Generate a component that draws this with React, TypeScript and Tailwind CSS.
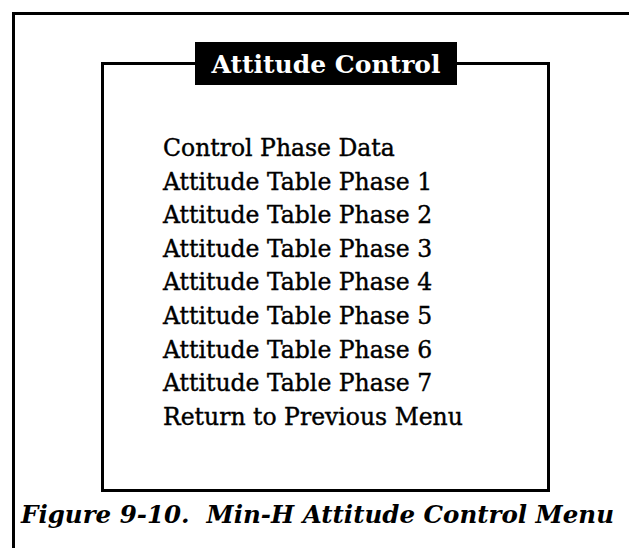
const items = [
  'Control Phase Data',
  'Attitude Table Phase 1',
  'Attitude Table Phase 2',
  'Attitude Table Phase 3',
  'Attitude Table Phase 4',
  'Attitude Table Phase 5',
  'Attitude Table Phase 6',
  'Attitude Table Phase 7',
  'Return to Previous Menu',
];

export default function App() {
  return (
    <div className="w-[629px] h-[548px] overflow-hidden bg-white pt-3 pl-3 font-['DejaVu_Serif',serif] text-black">
      <div className="w-[700px] h-[600px] border-t-[3px] border-l-[3px] border-black">
        {/* menu box */}
        <div className="relative mt-[47px] ml-[86px] w-[449px]">
          <div className="h-[430px] border-[3px] border-black pl-[59px] pt-[67px]">
            <ul className="text-[23.5px] leading-[33.6px] [-webkit-text-stroke:0.4px_black]">
              {items.map((item) => (
                <li key={item}>{item}</li>
              ))}
            </ul>
          </div>
          <div className="absolute -top-[20px] left-[94px] w-[262px] h-[43px] bg-black text-white flex items-center justify-center pt-[2px] text-[25px] font-bold">
            Attitude Control
          </div>
        </div>
        <p className="mt-[8px] pl-[6px] text-[24.5px] font-bold italic leading-[30px] whitespace-pre">
          {'Figure 9-10.  Min-H Attitude Control Menu'}
        </p>
      </div>
    </div>
  );
}
